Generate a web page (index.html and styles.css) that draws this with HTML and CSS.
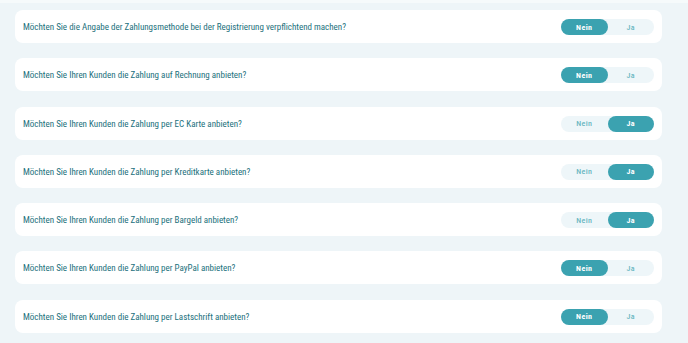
FILE: index.html
```html
<!DOCTYPE html>
<html lang="de">
<head>
<meta charset="utf-8">
<link rel="stylesheet" href="styles.css">
</head>
<body>
<div class="topbar"></div>
<main class="list">
  <div class="card">
    <span class="question">Möchten Sie die Angabe der Zahlungsmethode bei der Registrierung verpflichtend machen?</span>
    <div class="toggle"><span class="opt active">Nein</span><span class="opt">Ja</span></div>
  </div>
  <div class="card">
    <span class="question">Möchten Sie Ihren Kunden die Zahlung auf Rechnung anbieten?</span>
    <div class="toggle"><span class="opt active">Nein</span><span class="opt">Ja</span></div>
  </div>
  <div class="card">
    <span class="question">Möchten Sie Ihren Kunden die Zahlung per EC Karte anbieten?</span>
    <div class="toggle"><span class="opt">Nein</span><span class="opt active">Ja</span></div>
  </div>
  <div class="card">
    <span class="question">Möchten Sie Ihren Kunden die Zahlung per Kreditkarte anbieten?</span>
    <div class="toggle"><span class="opt">Nein</span><span class="opt active">Ja</span></div>
  </div>
  <div class="card">
    <span class="question">Möchten Sie Ihren Kunden die Zahlung per Bargeld anbieten?</span>
    <div class="toggle"><span class="opt">Nein</span><span class="opt active">Ja</span></div>
  </div>
  <div class="card">
    <span class="question">Möchten Sie Ihren Kunden die Zahlung per PayPal anbieten?</span>
    <div class="toggle"><span class="opt active">Nein</span><span class="opt">Ja</span></div>
  </div>
  <div class="card">
    <span class="question">Möchten Sie Ihren Kunden die Zahlung per Lastschrift anbieten?</span>
    <div class="toggle"><span class="opt active">Nein</span><span class="opt">Ja</span></div>
  </div>
</main>
</body>
</html>
```
FILE: styles.css
```css
html, body {
  margin: 0;
  padding: 0;
  background: #eef5f8;
  font-family: Roboto, "Liberation Sans", sans-serif;
  font-stretch: 78%;
}
.topbar {
  height: 3px;
  background: #f6fafb;
}
.list {
  display: flex;
  flex-direction: column;
  gap: 15.3px;
  padding: 7px 26px 0 15px;
}
.card {
  height: 33px;
  background: #ffffff;
  border-radius: 8px;
  display: flex;
  align-items: center;
  justify-content: space-between;
  padding: 0 8px 0 8px;
}
.question {
  padding-top: 1px;
  font-size: 9px;
  letter-spacing: 0;
  color: #22707c;
  font-weight: 420;
}
.toggle {
  display: flex;
  width: 93px;
  height: 16px;
  margin-top: 1px;
  background: #eef6f9;
  border-radius: 8px;
}
.opt {
  flex: 1;
  display: flex;
  align-items: center;
  justify-content: center;
  border-radius: 8px;
  font-size: 8px;
  font-weight: 500;
  letter-spacing: 0.4px;
  color: #6ab6c2;
}
.opt.active {
  background: #3ba2b0;
  color: #ffffff;
  font-weight: 700;
}
```
